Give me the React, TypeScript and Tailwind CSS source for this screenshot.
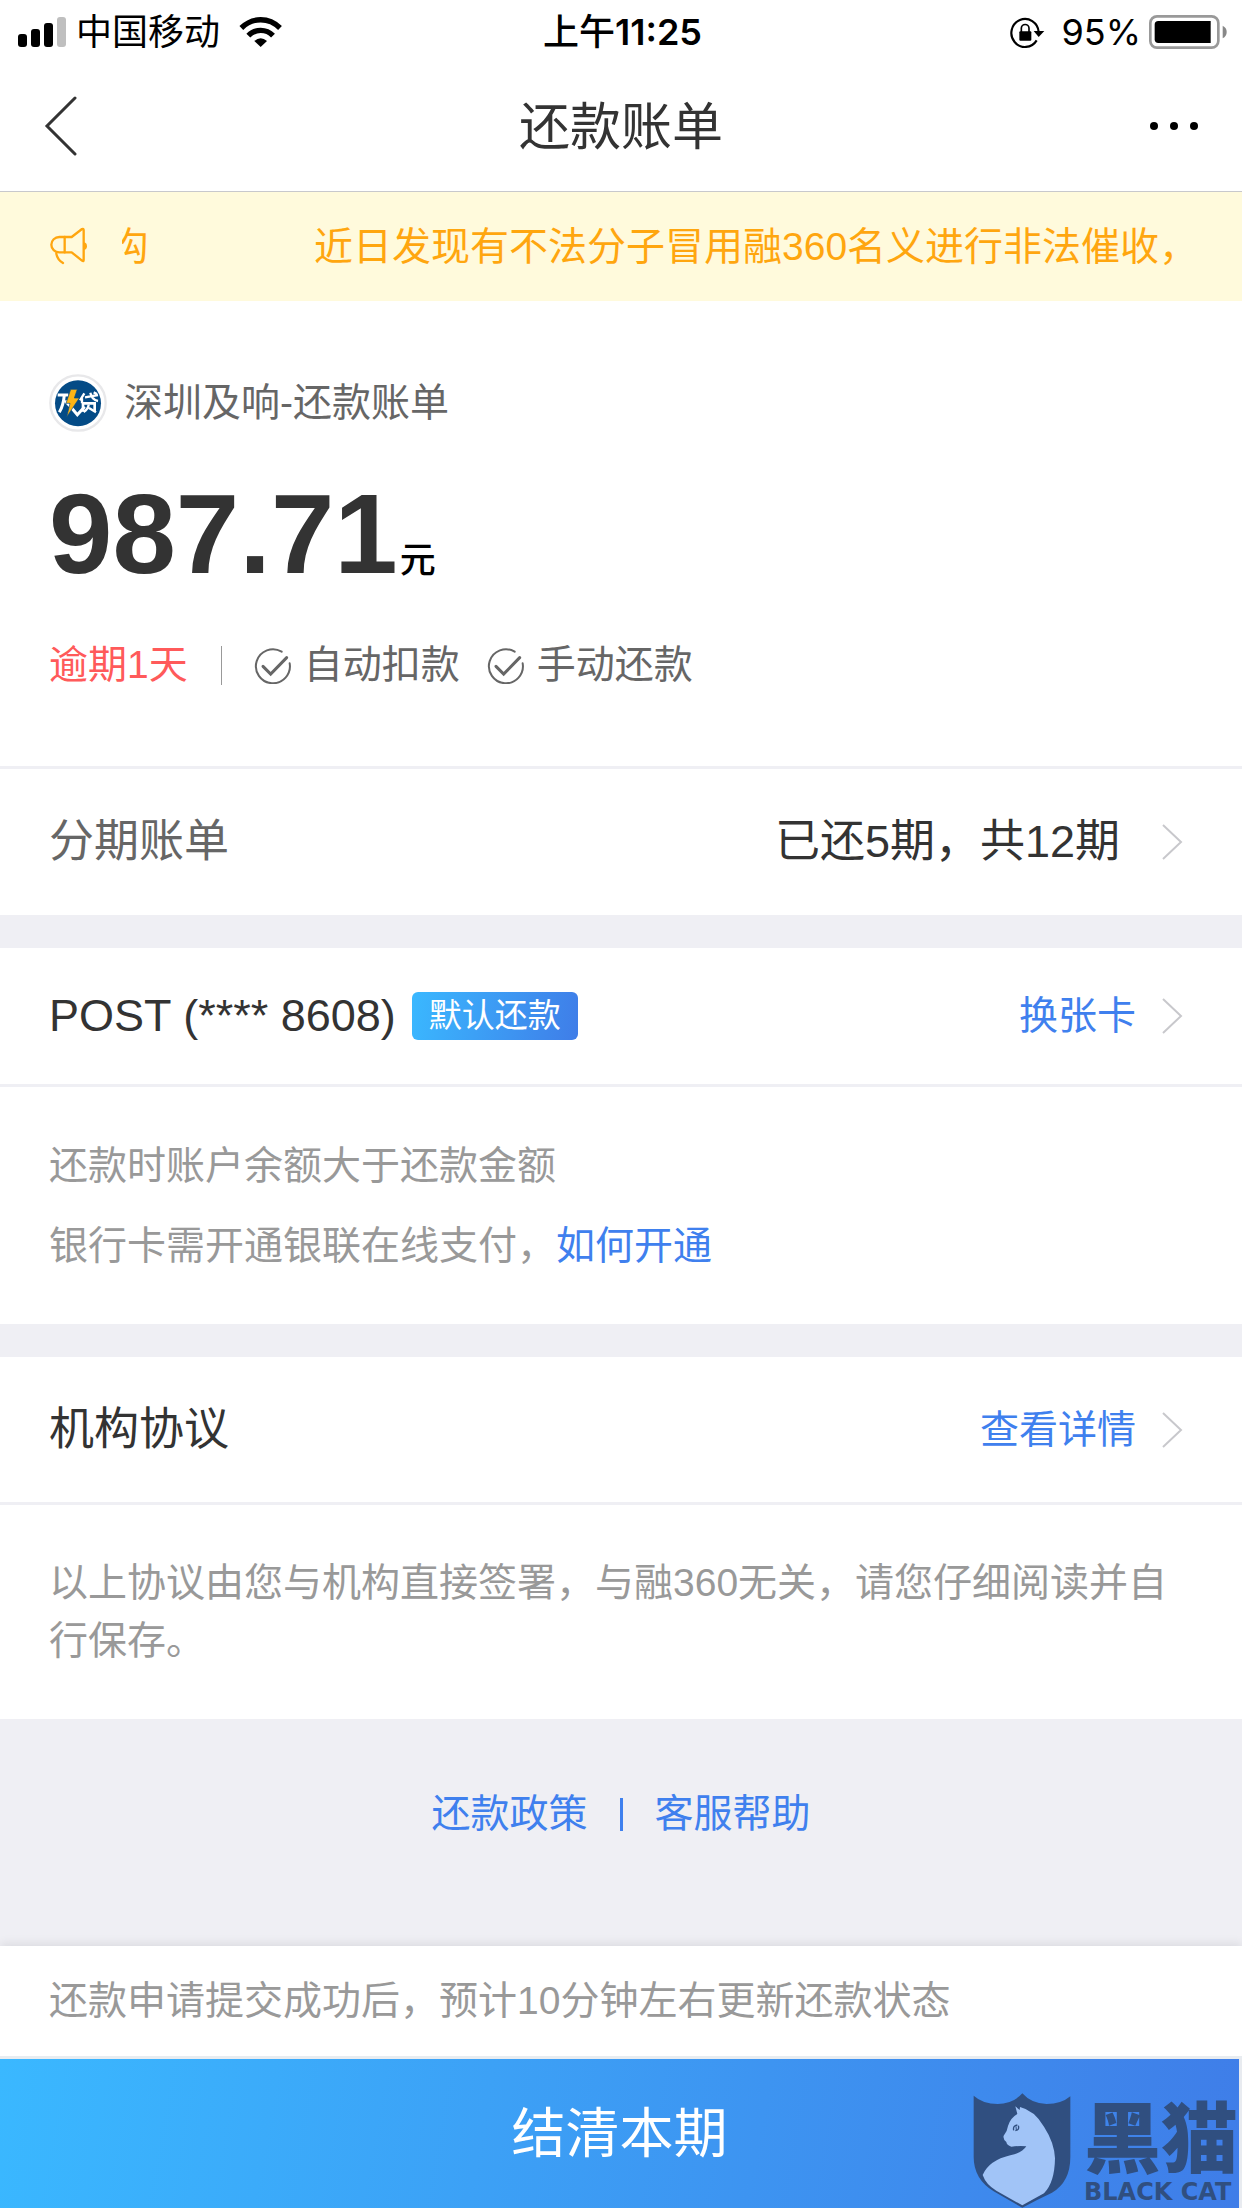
import React from 'react';

function SignalIcon() {
  return (
    <svg className="h-[30px] w-12 shrink-0" viewBox="54 45 144 90" aria-hidden="true">
      <rect x="54" y="96" width="27" height="39" rx="9" />
      <rect x="93" y="81" width="27" height="54" rx="9" />
      <rect x="132" y="63" width="27" height="72" rx="9" />
      <rect x="171" y="45" width="27" height="90" rx="9" fill="#bfbfbf" />
    </svg>
  );
}

function WifiIcon() {
  return (
    <svg className="h-8 w-11 shrink-0" viewBox="718 42 132 96" aria-hidden="true">
      <g fill="none" stroke="#000" strokeWidth="16">
        <path d="M725 78 C758 45 808 45 841 78" />
        <path d="M746 101 C766 80 800 80 820 101" />
      </g>
      <path d="M764 117 Q783 100 802 117 L783 135 Z" />
    </svg>
  );
}

function RotationLockIcon() {
  return (
    <svg className="h-[33px] w-9 shrink-0" viewBox="560 40 108 99" aria-hidden="true">
      <path d="M649 88 A41 42 0 1 0 643 113" fill="none" stroke="#000" strokeWidth="6.5" />
      <path d="M634 85 H666 L649 103 Z" />
      <rect x="591" y="86" width="36" height="28" rx="3" />
      <path d="M597 88 V77 a11 11 0 0 1 23 0 V88" fill="none" stroke="#000" strokeWidth="5" />
    </svg>
  );
}

function BatteryIcon() {
  return (
    <svg className="h-[34px] w-[78px] shrink-0" viewBox="982 39 234 102" aria-hidden="true">
      <rect x="986" y="43" width="204" height="94" rx="20" fill="none" stroke="#999" strokeWidth="8" />
      <path d="M1010 57 H1167 V123 H1010 Q999 123 999 112 V68 Q999 57 1010 57 Z" />
      <path d="M1203 71 Q1215 77 1215 90 Q1215 103 1203 109 Z" fill="#888" />
    </svg>
  );
}

function MegaphoneIcon() {
  return (
    <svg className="h-[39px] w-10 shrink-0" viewBox="147 680 120 117" aria-hidden="true">
      <g fill="none" stroke="#ffa60f" strokeWidth="7" strokeLinejoin="round" strokeLinecap="round">
        <path d="M215 756 H178 A24 23 0 0 1 178 710 H215 L246 686 Q251 684 251 690 V779 Q251 785 246 781 Z" />
        <path d="M194 710 V756" />
        <path d="M169 760 Q172 778 189 788" />
      </g>
      <path d="M252 726 Q261 728 261 738 Q261 747 252 749 Z" fill="#ffa60f" />
    </svg>
  );
}

function CheckIcon() {
  return (
    <svg className="h-[37px] w-[37px] shrink-0" viewBox="765 884 111 111" aria-hidden="true">
      <g fill="none" stroke="#666" strokeLinecap="round">
        <path d="M848 898 A51 51 0 1 0 872 933" strokeWidth="6" />
        <path d="M792 942 L815 965 L863 916" strokeWidth="9" />
      </g>
    </svg>
  );
}

function ChevronIcon() {
  return (
    <svg className="h-9 w-[21px] shrink-0" viewBox="0 0 21 36" aria-hidden="true">
      <path d="M1 1 L19 18 L1 35" fill="none" stroke="#c8c8cc" strokeWidth="2" />
    </svg>
  );
}

function LenderLogo() {
  return (
    <svg className="h-[58px] w-[58px] shrink-0" viewBox="150 71 174 174" aria-hidden="true">
      <circle cx="237" cy="158" r="83" fill="#fff" stroke="#e8e8ea" strokeWidth="7" />
      <circle cx="237" cy="159" r="69" fill="#044b86" />
      <g fill="none" stroke="#fff" strokeWidth="9">
        <path d="M176 134 H208" />
        <path d="M196 134 Q193 166 181 186" />
        <path d="M198 151 L216 170" />
        <path d="M256 129 L243 150 M249 144 V159" strokeWidth="7" />
        <path d="M258 141 L297 134 M274 127 Q278 148 297 152 M284 126 L294 131" strokeWidth="7" />
        <path d="M252 184 V159 H287 V184" strokeWidth="8" />
        <path d="M269 163 Q268 176 254 185 M270 173 L291 186" strokeWidth="7" />
        <path d="M216 171 L235 193 L257 169" />
      </g>
      <path d="M215 117 H235 L226 143 H241 L203 200 L213 159 H201 Z" fill="#fdb515" stroke="#044b86" strokeWidth="2" />
    </svg>
  );
}

function BlackCatMark() {
  return (
    <div className="pointer-events-none absolute right-0 bottom-0 flex w-[269px] items-end gap-3 text-[#304f80]">
      <svg className="h-[115px] w-[99px] shrink-0" viewBox="92 158 297 345" aria-hidden="true">
        <path
          d="M94 166 Q122 191 166 191 Q213 190 240 159 Q267 190 313 191 Q357 191 384 168 V350 Q384 425 329 457 Q280 480 240 502 Q200 480 154 453 Q94 416 94 350 Z"
          fill="#304f80"
        />
        <path
          d="M219 198 L232 209 L233 200 Q276 210 305 259 Q336 307 338 354 Q337 427 305 459 L240 495 L162 451 Q131 433 121 404 Q140 360 204 345 Q240 337 252 318 Q231 316 207 319 Q193 314 192 305 Q181 296 184 286 Q195 273 197 257 Q204 233 225 221 Z"
          fill="#a1c4f7"
        />
        <path d="M214 270 Q211 256 225 254 M219 271 Q232 269 228 256" fill="none" stroke="#304f80" strokeWidth="4" />
        <path d="M221 258 L222 269" stroke="#304f80" strokeWidth="3" />
      </svg>
      <div className="flex flex-col whitespace-nowrap">
        <span className="font-['Liberation_Sans','Noto_Sans_CJK_SC',sans-serif] text-[77px] leading-[72px] font-black">黑猫</span>
        <span className="font-['DejaVu_Sans',sans-serif] text-2xl leading-[32px] font-bold">BLACK CAT</span>
      </div>
    </div>
  );
}

export default function App() {
  return (
    <div
      lang="zh-CN"
      className="flex min-h-screen flex-col bg-[#efeff4] font-['Liberation_Sans','Noto_Sans_CJK_SC',sans-serif] text-[39px] leading-[58px] text-[#333]"
    >
      <header className="border-b border-[#c8c8cc] bg-white">
        <div className="grid h-16 grid-cols-[1fr_auto_1fr] items-center pr-[15px] pl-[18px] font-['Inter','Noto_Sans_CJK_SC',sans-serif] text-4xl leading-none text-black">
          <div className="flex items-center">
            <SignalIcon />
            <span className="mr-[19px] ml-[10px]">中国移动</span>
            <WifiIcon />
          </div>
          <span className="font-medium">
            上午<span className="font-semibold">11:25</span>
          </span>
          <div className="flex items-center justify-end">
            <RotationLockIcon />
            <span className="mr-2 ml-4">95%</span>
            <BatteryIcon />
          </div>
        </div>
        <div className="grid h-[127px] grid-cols-[1fr_auto_1fr] items-center px-[44px]">
          <button type="button" aria-label="返回" className="mb-1 h-[60px] w-[34px]">
            <svg className="h-[60px] w-[34px]" viewBox="0 0 34 60" aria-hidden="true">
              <path d="M31 2 L3 30 L31 58" fill="none" stroke="#333" strokeWidth="3" strokeLinecap="round" />
            </svg>
          </button>
          <h1 className="text-[51px] leading-[60px]">还款账单</h1>
          <button type="button" aria-label="更多" className="mb-1 flex justify-end gap-3">
            <span className="size-2 rounded-full bg-black" />
            <span className="size-2 rounded-full bg-black" />
            <span className="size-2 rounded-full bg-black" />
          </button>
        </div>
      </header>

      <div className="flex h-[109px] items-center bg-[#fffadc] pr-[50px] pl-[49px] text-[#ffa60f]">
        <MegaphoneIcon />
        <p className="ml-[33px] flex min-w-0 flex-1 gap-[165px] overflow-hidden whitespace-nowrap">
          <span className="-ml-3">沟</span>
          <span>近日发现有不法分子冒用融360名义进行非法催收，</span>
        </p>
      </div>

      <main>
        <section className="bg-white px-[49px] pt-[73px] pb-[72px]">
          <div className="flex items-center gap-[17px] text-[#666]">
            <LenderLogo />
            <h2>深圳及响-还款账单</h2>
          </div>
          <p className="mt-[45px] flex items-baseline gap-0.5 leading-none font-bold">
            <span className="text-[114px]">987.71</span>
            <span className="text-4xl font-medium text-black">元</span>
          </p>
          <div className="mt-[45px] flex items-center text-[#666]">
            <span className="text-[#ff5a5a]">逾期1天</span>
            <span className="mr-8 ml-[33px] h-[39px] w-px bg-[#999]" />
            <CheckIcon />
            <span className="mr-[27px] ml-[13px]">自动扣款</span>
            <CheckIcon />
            <span className="ml-[13px]">手动还款</span>
          </div>
        </section>

        <button
          type="button"
          className="flex h-[149px] w-full items-center border-t-[3px] border-[#efeff4] bg-white pr-[59px] pl-[49px] text-[45px]"
        >
          <span className="flex-1 text-left text-[#666]">分期账单</span>
          <span className="mr-[42px]">已还5期，共12期</span>
          <ChevronIcon />
        </button>

        <section className="mt-[33px] bg-white">
          <div className="flex h-[139px] items-center border-b-[3px] border-[#efeff4] pr-[59px] pl-[49px]">
            <h2 className="text-[45px]">POST (**** 8608)</h2>
            <span className="ml-4 rounded-md bg-linear-[100deg,#3ab8ff,#3f7de8] px-[17px] text-[33px] leading-[48px] text-white">
              默认还款
            </span>
            <a href="#card" className="ml-auto flex items-center gap-[26px] text-[#3f80ee]">
              换张卡
              <ChevronIcon />
            </a>
          </div>
          <div className="flex flex-col gap-[22px] px-[49px] pt-[50px] pb-[49px] text-[#999]">
            <p>还款时账户余额大于还款金额</p>
            <p>
              银行卡需开通银联在线支付，
              <a href="#activate" className="text-[#3f80ee]">如何开通</a>
            </p>
          </div>
        </section>

        <section className="mt-[33px] bg-white">
          <div className="flex h-[148px] items-center border-b-[3px] border-[#efeff4] pr-[59px] pl-[49px]">
            <h2 className="text-[45px]">机构协议</h2>
            <a href="#agreement" className="ml-auto flex items-center gap-[26px] text-[#3f80ee]">
              查看详情
              <ChevronIcon />
            </a>
          </div>
          <p className="px-[49px] py-[49px] text-[#999]">
            以上协议由您与机构直接签署，与融360无关，请您仔细阅读并自行保存。
          </p>
        </section>

        <nav className="flex items-center justify-center gap-8 pt-[66px] text-[#3f80ee]">
          <a href="#policy">还款政策</a>
          <span className="h-[33px] w-[3px] bg-[#3f80ee]" />
          <a href="#help">客服帮助</a>
        </nav>
      </main>

      <footer className="mt-auto bg-white shadow-[0_-3px_9px_rgba(0,0,0,0.08)]">
        <p className="border-b-[3px] border-[#e8ecf0] px-[49px] py-[26px] text-[#999]">
          还款申请提交成功后，预计10分钟左右更新还款状态
        </p>
        <div className="relative bg-[#e8ebf0] pr-[3px]">
          <button
            type="button"
            className="h-[149px] w-full bg-linear-[100deg,#3ab8ff,#3f7de8] text-[54px] leading-[60px] text-white"
          >
            结清本期
          </button>
          <BlackCatMark />
        </div>
      </footer>
    </div>
  );
}
